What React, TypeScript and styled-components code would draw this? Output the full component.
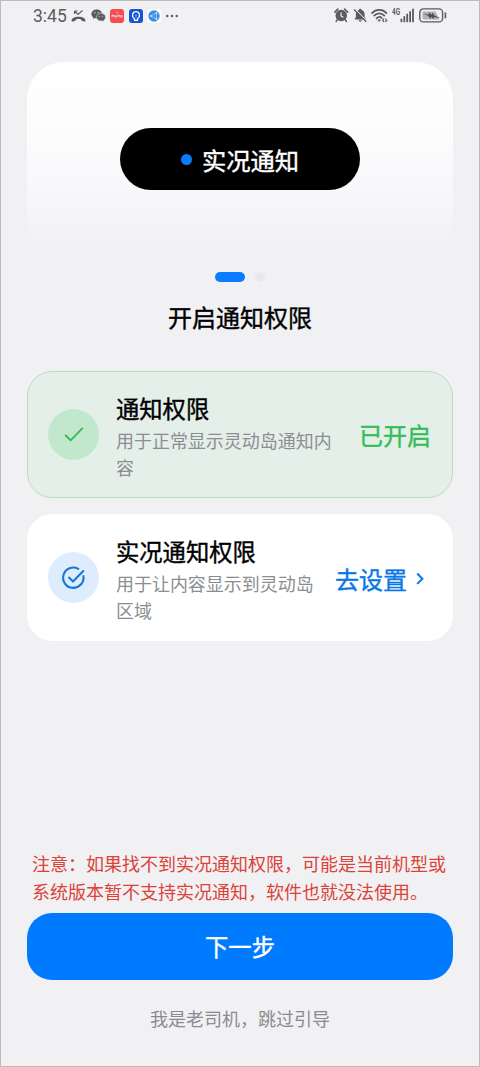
import React from "react";
import styled, { createGlobalStyle } from "styled-components";

const GlobalStyle = createGlobalStyle`
  * { box-sizing: border-box; }
  body { margin: 0; background: #f1f1f4; }
`;

const Screen = styled.div`
  width: 480px;
  height: 1067px;
  overflow: hidden;
  display: flex;
  flex-direction: column;
  background: #f1f1f4;
  border: 1px solid #bcbcbf;
  font-family: "Noto Sans CJK SC", "Noto Sans", sans-serif;
  color: #000;
`;

const StatusBar = styled.header`
  height: 29px;
  flex: none;
  display: flex;
  justify-content: space-between;
  padding: 0 32px 0 32px;
`;

const StatusGroup = styled.div<{ $gap: number }>`
  display: flex;
  align-items: center;
  gap: ${(p) => p.$gap}px;
  color: #5b5b5e;
  svg { display: block; flex: none; }
`;

const Clock = styled.span`
  width: 34px;
  font: 400 17.5px/28px Roboto, sans-serif;
  white-space: nowrap;
`;

const Main = styled.main`
  flex: 1;
  display: flex;
  flex-direction: column;
  padding: 32px 26px 0;
`;

const Preview = styled.section`
  height: 192px;
  border-radius: 37px;
  background: linear-gradient(180deg, #ffffff 0%, #fdfdfe 28%, #f9f9fb 60%, #f1f1f4 100%);
  display: flex;
  justify-content: center;
  align-items: flex-start;
  padding-top: 66px;
`;

const Island = styled.div`
  width: 240px;
  height: 62px;
  border-radius: 31px;
  background: #000;
  color: #fff;
  display: flex;
  align-items: center;
  justify-content: center;
  gap: 10px;
  padding-top: 1px;
  font-size: 24.3px;
  -webkit-text-stroke: 0.4px currentColor;
  line-height: 36px;
`;

const Dot = styled.i`
  width: 11px;
  height: 11px;
  border-radius: 50%;
  background: #0a7cff;
`;

const Pager = styled.div`
  height: 10px;
  margin-top: 18.4px;
  display: flex;
  justify-content: center;
  gap: 10px;
`;

const Page = styled.i<{ $active?: boolean }>`
  width: ${(p) => (p.$active ? 30 : 10)}px;
  height: 10px;
  border-radius: 5px;
  background: ${(p) => (p.$active ? "#0a7cff" : "#e9e9ec")};
`;

const Title = styled.h1`
  margin: 16.6px 0 0;
  height: 36px;
  text-align: center;
  font-size: 24px;
  font-weight: 400;
  -webkit-text-stroke: 0.4px currentColor;
  line-height: 36px;
`;

const CardList = styled.div`
  display: flex;
  flex-direction: column;
  gap: 16.5px;
  margin-top: 36px;
`;

const Card = styled.section<{ $granted?: boolean }>`
  height: 127px;
  border-radius: 25px;
  border: 1px solid ${(p) => (p.$granted ? "#b4dfc1" : "#fff")};
  background: ${(p) => (p.$granted ? "#e4efe9" : "#fff")};
  display: flex;
  align-items: center;
  padding: 0 21px 0 20px;
`;

const Badge = styled.div<{ $granted?: boolean }>`
  width: 51px;
  height: 51px;
  flex: none;
  border-radius: 50%;
  background: ${(p) => (p.$granted ? "#c1e8cd" : "#deedfd")};
  display: flex;
  align-items: center;
  justify-content: center;
`;

const CardText = styled.div<{ $width: number }>`
  width: ${(p) => p.$width}px;
  margin-left: 17px;
  padding-top: 2.5px;
  flex: none;
`;

const CardTitle = styled.h2`
  margin: 0;
  font-size: 23.3px;
  font-weight: 400;
  -webkit-text-stroke: 0.4px currentColor;
  line-height: 34px;
  white-space: nowrap;
`;

const CardDetail = styled.p`
  margin: 2px 0 0;
  font-size: 17.98px;
  line-height: 27px;
  color: #8b8e90;
`;

const Action = styled.div<{ $granted?: boolean }>`
  margin-left: auto;
  display: flex;
  align-items: center;
  gap: 9px;
  padding-top: 2px;
  padding-right: ${(p) => (p.$granted ? 0 : 7)}px;
  font-size: 24px;
  -webkit-text-stroke: 0.4px currentColor;
  line-height: 36px;
  white-space: nowrap;
  color: ${(p) => (p.$granted ? "#35bd58" : "#0878e8")};
`;

const Footer = styled.footer`
  margin-top: auto;
  display: flex;
  flex-direction: column;
  padding-bottom: 34px;
`;

const Notice = styled.p`
  margin: 0 0 8px 5px;
  font-size: 18px;
  line-height: 28px;
  color: #dc4238;
  white-space: nowrap;
`;

const NextButton = styled.button`
  height: 66.5px;
  border: 0;
  border-radius: 25px;
  background: #007aff;
  color: #fff;
  font: 400 23.3px/36px "Noto Sans CJK SC", sans-serif;
  -webkit-text-stroke: 0.4px currentColor;
  padding: 0;
`;

const SkipLink = styled.button`
  margin-top: 24.5px;
  height: 28px;
  padding: 0;
  border: 0;
  background: none;
  font: 400 18px/28px "Noto Sans CJK SC", sans-serif;
  color: #8b8b8f;
`;

const MissedCall = () => (
  <svg width="15" height="14" viewBox="0 0 15 14" fill="none" stroke="currentColor">
    <path d="M3.5 2v3M3.5 2h3M3.7 2.2 7 5.4 11.5 1.5" strokeWidth="1.1" />
    <path d="M.6 11.4c0-2.2 3.2-3.7 6.9-3.7s6.9 1.5 6.9 3.7c0 1.1-.4 1.3-1.2 1.1l-2.4-.7c-.5-.2-.6-.5-.6-1.4-1.7-.5-3.7-.5-5.4 0 0 .9-.1 1.2-.6 1.4l-2.4.7c-.8.2-1.2 0-1.2-1.1Z" fill="currentColor" stroke="none" />
  </svg>
);

const Chat = () => (
  <svg width="15" height="13" viewBox="0 0 15 13">
    <path d="M5.7.5C2.7.5.4 2.4.4 4.9c0 1.4.7 2.6 1.9 3.4l-.5 1.8 2-1c.6.2 1.3.3 1.9.3C8.7 9.4 11 7.4 11 4.9S8.7.5 5.7.5Z" fill="currentColor" />
    <path d="M10.1 4.3c-2.6 0-4.6 1.7-4.6 3.9s2 3.9 4.6 3.9c.5 0 1-.1 1.5-.2l1.6.8-.4-1.4c1.1-.7 1.8-1.8 1.8-3.1 0-2.2-2-3.9-4.5-3.9Z" fill="currentColor" stroke="#f1f1f4" strokeWidth=".5" />
    <g fill="#f1f1f4"><circle cx="3.9" cy="3.7" r=".6" /><circle cx="7.3" cy="3.7" r=".6" /><circle cx="8.6" cy="7.2" r=".5" /><circle cx="11.5" cy="7.2" r=".5" /></g>
  </svg>
);

const RedApp = () => (
  <svg width="14" height="14" viewBox="0 0 14 14">
    <rect width="14" height="14" rx="3" fill="#f24d55" />
    <path d="m5.5 3 1.5 1 1.5-1" stroke="#ff9fa3" fill="none" />
    <path d="M2 6v2.2M3.6 6v2.2M2 6.2h1.5M5 6v2.2h1.4V6M8 8.2V6h1.3v2.2M10.7 6v2.2H12V6" stroke="#fff" strokeWidth=".8" fill="none" opacity=".8" />
  </svg>
);

const BulbApp = () => (
  <svg width="14" height="14" viewBox="0 0 14 14" fill="none" stroke="#fff">
    <rect width="14" height="14" rx="3" fill="#1455d5" stroke="none" />
    <path d="M5.5 9.7C2.1 7.7 3.4 2.7 7 2.7s4.9 5 1.5 7v1.6h-3Z" strokeWidth="1.2" />
    <path d="M7 9V6.5M5.9 5.7 7 6.7l1.1-1" strokeWidth=".7" opacity=".7" />
  </svg>
);

const ShareApp = () => (
  <svg width="14" height="14" viewBox="0 0 14 14">
    <rect width="14" height="14" rx="3" fill="#fff" />
    <circle cx="7" cy="7" r="5.7" fill="#3c8ee8" />
    <path d="M9.5 4 4 7l5.5 3M9.5 4v6" stroke="#a8d3ff" fill="none" strokeWidth=".8" />
    <g fill="#c4e1ff"><circle cx="9.5" cy="4" r=".9" /><circle cx="4" cy="7" r="1" /><circle cx="9.5" cy="10" r=".9" /></g>
  </svg>
);

const More = () => (
  <svg width="13" height="4" viewBox="0 0 13 4" fill="currentColor">
    <circle cx="2.2" cy="2" r="1.25" /><circle cx="7" cy="2" r="1.25" /><circle cx="11.7" cy="2" r="1.25" />
  </svg>
);

const Alarm = () => (
  <svg width="14.5" height="14.5" viewBox="0 0 15 15">
    <path d="M.9 4.2 4 1.2M14.1 4.2l-3.1-3" stroke="currentColor" strokeWidth="1.7" strokeLinecap="round" />
    <path d="m3.5 12-1.3 1.8M11.5 12l1.3 1.8" stroke="currentColor" strokeWidth="1.6" strokeLinecap="round" />
    <circle cx="7.5" cy="7.8" r="5.9" fill="currentColor" />
    <path d="M7.3 4.7v3.5l2.4 1.4" fill="none" stroke="#f1f1f4" strokeWidth="1.2" />
  </svg>
);

const Muted = () => (
  <svg width="14.5" height="14.5" viewBox="0 0 15 15">
    <path d="M1.8 12v-.9L3 9.6V6.2c0-2.1 1.3-3.6 3.2-4.1.1-1.6 2.5-1.6 2.6 0 1.9.5 3.2 2 3.2 4.1v3.4l1.2 1.5v.9ZM5.7 12.7h3.6c-.6 1.9-3 1.9-3.6 0Z" fill="currentColor" />
    <path d="m1.9.9 12.6 12.8" stroke="#f1f1f4" strokeWidth="1.2" />
    <path d="m1 1.5 12.7 12.8" stroke="currentColor" strokeWidth="1.4" />
  </svg>
);

const Wifi = () => (
  <svg width="17" height="15" viewBox="0 0 17 15" fill="none" stroke="currentColor" strokeWidth="1.7" strokeLinecap="round">
    <path d="M1 5.1c4-4.2 10.5-4.2 14.5 0M3.2 7.7c2.8-3 7.2-3 10.1 0M5.6 10.3c1.6-1.6 3.6-1.6 5.1-.3" />
    <path d="m8.2 13.7-1.7-1.7q1.7-1.3 3.4 0Z" fill="currentColor" stroke="none" />
    <path d="m12.7 11-1 1.3 1 1.2M14.7 11l1 1.3-1 1.2" strokeWidth="1.2" />
  </svg>
);

const Cellular = () => (
  <svg width="23" height="15" viewBox="0 0 23 15">
    <text x="0" y="6.5" fontFamily="Roboto, sans-serif" fontSize="8.5" fontWeight="700" textLength="8" lengthAdjust="spacingAndGlyphs" fill="currentColor">4G</text>
    <path d="M9.4 11.4v2M12.3 9v4.4M15.2 6.4v7M18.1 3.8v9.6M21 1.4v12" stroke="currentColor" strokeWidth="1.8" strokeLinecap="round" />
  </svg>
);

const Battery = () => (
  <svg width="28" height="15" viewBox="0 0 28 15">
    <rect x=".8" y=".9" width="22.8" height="13" rx="3.5" fill="none" stroke="currentColor" strokeWidth="1.4" />
    <path d="M3.5 3.4h13l3.8 8H5.2q-1.7 0-1.7-1.7Z" fill="#b2b2b5" />
    <path d="m4.3 5.5 5.2 1.2.6-2.4 2.5 2.5.6-2.3 2.4 3 6 2.7-6.5-1.1-.5 2.1-2.4-2.4-.7 2.2-2.3-3Z" fill="#505053" />
    <path d="M26.4 5v4.8" stroke="currentColor" strokeWidth="1.6" strokeLinecap="round" />
  </svg>
);

const Check = () => (
  <svg width="22" height="18" viewBox="0 0 22 18" fill="none" stroke="#35bd58" strokeWidth="1.9" strokeLinecap="round" strokeLinejoin="round">
    <path d="m2.7 10.5 4.9 4.8L19.3 3.4" />
  </svg>
);

const CircleCheck = () => (
  <svg width="25" height="25" viewBox="0 0 25 25" fill="none" stroke="#1877d8" strokeWidth="2.1" strokeLinecap="round" strokeLinejoin="round">
    <path d="M17.3 3.8A10.2 10.2 0 1 0 22.4 11.1" />
    <path d="m8 12.6 4 4L22.3 6" />
  </svg>
);

const Chevron = () => (
  <svg width="8" height="14" viewBox="0 0 8 14" fill="none" stroke="currentColor" strokeWidth="2">
    <path d="m1.2 1.5 5.2 5.2-5.2 5.2" />
  </svg>
);

export default function App() {
  return (
    <>
      <GlobalStyle />
      <Screen>
        <StatusBar>
          <StatusGroup $gap={4.4}>
            <Clock>3:45</Clock>
            <MissedCall />
            <Chat />
            <RedApp />
            <BulbApp />
            <ShareApp />
            <More />
          </StatusGroup>
          <StatusGroup $gap={4}>
            <Alarm />
            <Muted />
            <Wifi />
            <Cellular />
            <Battery />
          </StatusGroup>
        </StatusBar>
        <Main>
          <Preview>
            <Island>
              <Dot />
              <span>实况通知</span>
            </Island>
          </Preview>
          <Pager>
            <Page $active />
            <Page />
          </Pager>
          <Title>开启通知权限</Title>
          <CardList>
            <Card $granted>
              <Badge $granted><Check /></Badge>
              <CardText $width={220}>
                <CardTitle>通知权限</CardTitle>
                <CardDetail>用于正常显示灵动岛通知内容</CardDetail>
              </CardText>
              <Action $granted>已开启</Action>
            </Card>
            <Card>
              <Badge><CircleCheck /></Badge>
              <CardText $width={202}>
                <CardTitle>实况通知权限</CardTitle>
                <CardDetail>用于让内容显示到灵动岛区域</CardDetail>
              </CardText>
              <Action>去设置<Chevron /></Action>
            </Card>
          </CardList>
          <Footer>
            <Notice>
              注意：如果找不到实况通知权限，可能是当前机型或<br />
              系统版本暂不支持实况通知，软件也就没法使用。
            </Notice>
            <NextButton>下一步</NextButton>
            <SkipLink>我是老司机，跳过引导</SkipLink>
          </Footer>
        </Main>
      </Screen>
    </>
  );
}
